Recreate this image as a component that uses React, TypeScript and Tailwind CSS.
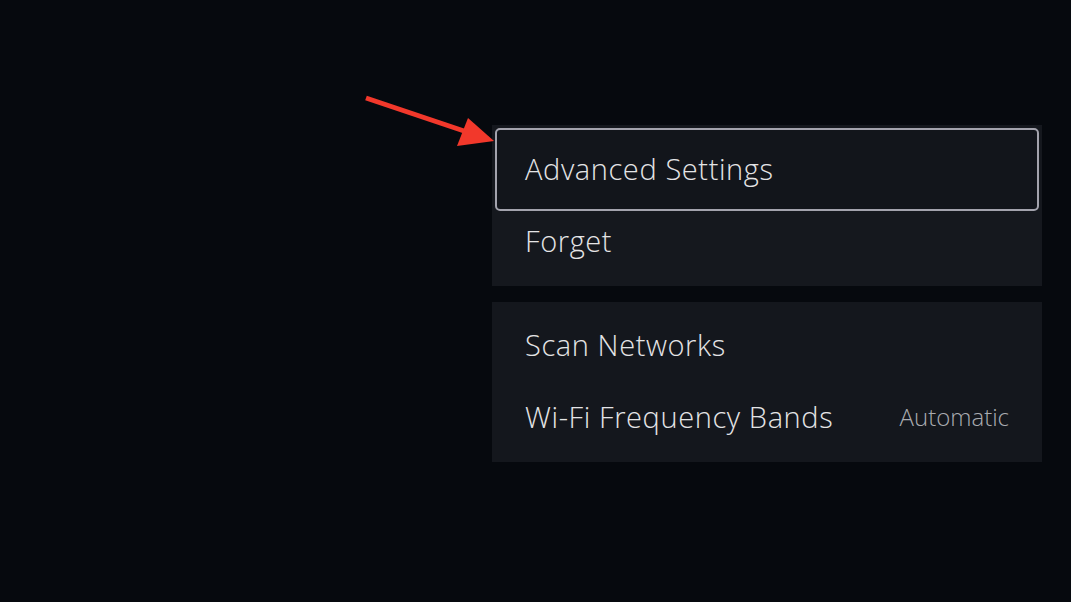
export default function App() {
  return (
    <div
      className="relative h-[602px] w-[1071px] overflow-hidden bg-[#06090e] text-[#e4e4e6]"
      style={{ fontFamily: '"Open Sans", "Noto Sans", sans-serif' }}
    >
      <div className="flex flex-col gap-4 pl-[492px] pt-[125px]">
        {/* First group */}
        <div className="flex w-[550px] flex-col bg-[#15181e] px-[3px] pt-[3px] pb-[3px]">
          <div className="flex h-[83px] items-center rounded-[5px] border-2 border-[#a3a3ad] bg-[#12151b] pl-[28px] pb-[2px]">
            <span className="text-[29px] font-light tracking-[0.6px]">Advanced Settings</span>
          </div>
          <div className="flex h-[72px] items-center pl-[30px] pb-[13px]">
            <span className="text-[29px] font-light tracking-[0.6px]">Forget</span>
          </div>
        </div>

        {/* Second group */}
        <div className="flex w-[550px] flex-col bg-[#14171d] py-[8px]">
          <div className="flex h-[72px] items-center pl-[33px] pb-[2px]">
            <span className="text-[29px] font-light tracking-[0.6px]">Scan Networks</span>
          </div>
          <div className="flex h-[72px] items-center justify-between pl-[33px] pr-[33px] pb-[3px]">
            <span className="text-[29px] font-light tracking-[0.6px]">Wi-Fi Frequency Bands</span>
            <span className="text-[24px] font-light text-[#a9abb0]">Automatic</span>
          </div>
        </div>
      </div>

      {/* Annotation arrow */}
      <svg className="absolute left-0 top-0" width="1071" height="602" viewBox="0 0 1071 602">
        <line x1="366" y1="98" x2="470" y2="133" stroke="#f2382b" strokeWidth="5" strokeLinecap="butt" />
        <polygon points="468,118 457,146 494,141" fill="#f2382b" />
      </svg>
    </div>
  );
}
